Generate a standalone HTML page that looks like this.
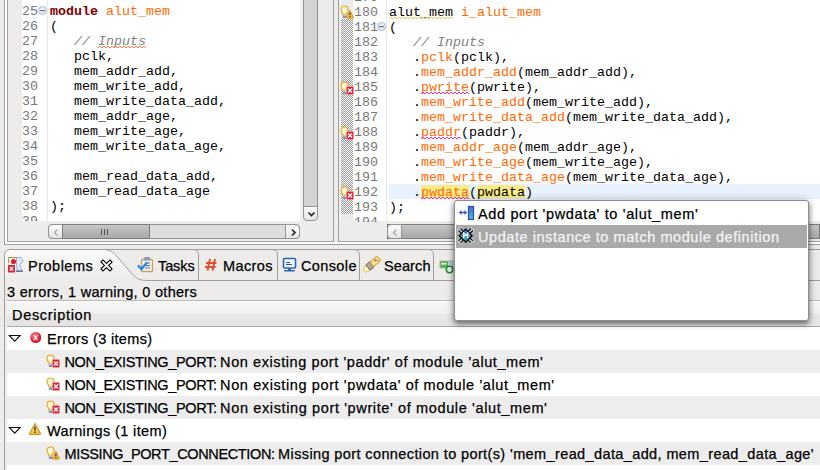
<!DOCTYPE html>
<html><head><meta charset="utf-8">
<style>
*{margin:0;padding:0;box-sizing:border-box}
html,body{width:820px;height:470px;overflow:hidden;background:#edeceb;position:relative}
.a{position:absolute}
.mono{font-family:"Liberation Mono",monospace;font-size:13.333px;line-height:15px;white-space:pre;color:#000}
.ui{font-family:"Liberation Sans",sans-serif;font-size:14.5px;line-height:17px;white-space:pre;color:#000;-webkit-text-stroke:0.25px currentColor}
.ln{color:#787878;text-align:right}
.kw{color:#7f0000;font-weight:bold}
.id{color:#ff6a00}
.cm{color:#808080;font-style:italic}
.hly{background:#fbec88}
.sq{}
</style></head><body>

<svg width="0" height="0" style="position:absolute">
<defs>
 <radialGradient id="gBulb" cx="0.45" cy="0.42" r="0.55"><stop offset="0" stop-color="#fffff4"/><stop offset="0.6" stop-color="#fdf3c0"/><stop offset="1" stop-color="#f4d070"/></radialGradient>
 <linearGradient id="gBase" x1="0" y1="0" x2="0" y2="1"><stop offset="0" stop-color="#d8dde4"/><stop offset="1" stop-color="#5a7090"/></linearGradient>
 <radialGradient id="gErr" cx="0.4" cy="0.35" r="0.7"><stop offset="0" stop-color="#ff8a95"/><stop offset="0.6" stop-color="#e52a3a"/><stop offset="1" stop-color="#c01020"/></radialGradient>
 <linearGradient id="gWarn" x1="0" y1="0" x2="0" y2="1"><stop offset="0" stop-color="#fff2b0"/><stop offset="1" stop-color="#f0b830"/></linearGradient>
 <linearGradient id="gBlue" x1="0" y1="0" x2="0" y2="1"><stop offset="0" stop-color="#4a70d0"/><stop offset="1" stop-color="#50c0b0"/></linearGradient>
 <linearGradient id="gDia" x1="1" y1="0" x2="0" y2="1"><stop offset="0" stop-color="#3a5ad8"/><stop offset="1" stop-color="#40c0a8"/></linearGradient>
 <symbol id="bulb" viewBox="0 0 16 16">
   <path d="M3.8 10.5 C3.6 9 2 8 2 5.6 C2 3.6 3.6 2 5.6 2 C7.6 2 9.2 3.6 9.2 5.6 C9.2 8 7.6 9 7.4 10.5 Z" fill="url(#gBulb)" stroke="#e8a735" stroke-width="1.1"/>
   <rect x="3.7" y="10.3" width="3.8" height="3.4" rx="1" fill="url(#gBase)"/>
 </symbol>
 <symbol id="sqerr" viewBox="0 0 16 16">
   <rect x="7" y="6" width="8" height="9" fill="#fff" opacity="0.8"/>
   <rect x="7.5" y="6.5" width="7" height="8" fill="#d9243a"/>
   <path d="M9 8.5 L13 12.5 M13 8.5 L9 12.5" stroke="#fff" stroke-width="1.2"/>
 </symbol>
 <symbol id="triwarn" viewBox="0 0 16 16">
   <path d="M10.9 6.4 L14.4 13.4 Q14.6 14.1 13.9 14.1 H7.9 Q7.2 14.1 7.4 13.4 Z" fill="url(#gWarn)" stroke="#d9901a" stroke-width="1" stroke-linejoin="round"/>
   <rect x="10.3" y="8.6" width="1.2" height="2.8" fill="#3a2a00"/>
   <rect x="10.3" y="12" width="1.2" height="1.1" fill="#3a2a00"/>
 </symbol>
 <symbol id="fold" viewBox="0 0 10 10">
   <circle cx="4.5" cy="4.5" r="4" fill="#e4eef6" stroke="#aab8c6" stroke-width="1"/>
   <rect x="2" y="4" width="5" height="1.2" fill="#6a7a8a"/>
 </symbol>
</defs></svg>
<div class="a" style="left:4px;top:0;width:1px;height:245px;background:#a09f9c"></div>
<div class="a" style="left:5px;top:0;width:2px;height:242px;background:#fff"></div>
<div class="a" style="left:4px;top:244px;width:816px;height:1px;background:#a09f9c"></div>
<div class="a" style="left:5px;top:242px;width:815px;height:2px;background:#fff"></div>
<div class="a" style="left:7px;top:0;width:1px;height:242px;background:#a09f9c"></div>
<div class="a" style="left:7px;top:241px;width:327px;height:1px;background:#a09f9c"></div>
<div class="a" style="left:333px;top:0;width:1px;height:242px;background:#a09f9c"></div>
<div class="a" style="left:338px;top:0;width:1px;height:242px;background:#a09f9c"></div>
<div class="a" style="left:338px;top:241px;width:482px;height:1px;background:#a09f9c"></div>
<div class="a" style="left:22px;top:0;width:25px;height:221px;background:#fff"></div>
<div class="a" style="left:47px;top:0;width:1px;height:221px;background:#e8e8e8"></div>
<div class="a" style="left:48px;top:0;width:252px;height:221px;background:#fff;overflow:hidden"><div class="a mono" style="left:2px;top:4px"><span class="kw">module</span> <span class="id">alut_mem</span>
(
   <span class="cm">// <span class="sq sqo">Inputs</span></span>
   pclk,
   mem_addr_add,
   mem_write_add,
   mem_write_data_add,
   mem_addr_age,
   mem_write_age,
   mem_write_data_age,

   mem_read_data_add,
   mem_read_data_age
);
</div></div>
<div class="a mono ln" style="left:14px;top:4px;width:24px;height:217px;overflow:hidden">25
26
27
28
29
30
31
32
33
34
35
36
37
38
39</div>
<svg class="a" style="left:38px;top:6px" width="10" height="10"><use href="#fold"/></svg>
<div class="a" style="left:300px;top:0;width:3px;height:221px;background:#f0efee"></div>
<div class="a" style="left:303px;top:-4px;width:15px;height:211px;background:#d5d3d1;border:1px solid #96948f;border-radius:0 0 0 0"></div>
<div class="a" style="left:303px;top:206px;width:15px;height:15px;background:linear-gradient(#fbfbfb,#e4e4e4);border:1px solid #96948f;border-radius:0 0 4px 4px"><svg class="a" style="left:3px;top:3px" width="9" height="8"><path d="M1.5 2.5 L4.5 5.5 L7.5 2.5" fill="none" stroke="#222" stroke-width="1.6"/></svg></div>
<div class="a" style="left:48px;top:224px;width:252px;height:15px;background:#dddcda;border:1px solid #96948f;border-radius:4px"></div>
<div class="a" style="left:48px;top:224px;width:15px;height:15px;background:linear-gradient(#fbfbfb,#e4e4e4);border:1px solid #96948f;border-radius:4px 0 0 4px"><svg class="a" style="left:3px;top:3px" width="8" height="9"><path d="M5.5 1.5 L2.5 4.5 L5.5 7.5" fill="none" stroke="#aaa" stroke-width="1.3"/></svg></div>
<div class="a" style="left:62px;top:224px;width:88px;height:15px;background:linear-gradient(#c6c6c6,#a8a8a8);border:1px solid #7c7c7c"><div class="a" style="left:38px;top:4px;width:1px;height:6px;background:#555"></div><div class="a" style="left:41px;top:4px;width:1px;height:6px;background:#555"></div><div class="a" style="left:44px;top:4px;width:1px;height:6px;background:#555"></div></div>
<div class="a" style="left:285px;top:224px;width:15px;height:15px;background:linear-gradient(#fbfbfb,#e4e4e4);border:1px solid #96948f;border-radius:0 4px 4px 0"><svg class="a" style="left:4px;top:3px" width="8" height="9"><path d="M2 1.5 L5 4.5 L2 7.5" fill="none" stroke="#222" stroke-width="1.6"/></svg></div>
<div class="a" style="left:340px;top:0;width:1px;height:221px;background:#f6f6f6"></div>
<div class="a" style="left:341px;top:0;width:12px;height:19px;background:#ebebeb"></div>
<div class="a" style="left:341px;top:19px;width:12px;height:195px;background:repeating-conic-gradient(#969696 0 25%,#ffffff 0 50%) 0 0/2px 2px"></div>
<div class="a" style="left:341px;top:214px;width:12px;height:7px;background:#ebebeb"></div>
<div class="a" style="left:353px;top:0;width:33px;height:221px;background:#fff"></div>
<div class="a" style="left:386px;top:0;width:1px;height:221px;background:#e8e8e8"></div>
<div class="a" style="left:387px;top:0;width:433px;height:221px;background:#fff;overflow:hidden"><div class="a" style="left:2px;top:184px;width:431px;height:15px;background:#e8f2fe"></div><div class="a" style="left:34px;top:185px;width:48px;height:13px;background:#fbec88"></div><div class="a" style="left:90px;top:185px;width:48px;height:13px;background:#fbec88"></div><div class="a mono" style="left:2px;top:5px"><span class="sq sqy">alut_mem</span> <span class="id">i_alut_mem</span>
(
   <span class="cm">// Inputs</span>
   .<span class="id">pclk</span>(pclk),
   .<span class="id">mem_addr_add</span>(mem_addr_add),
   .<span class="id"><span class="sq sqm">pwrite</span></span>(pwrite),
   .<span class="id">mem_write_add</span>(mem_write_add),
   .<span class="id">mem_write_data_add</span>(mem_write_data_add),
   .<span class="id"><span class="sq sqm">paddr</span></span>(paddr),
   .<span class="id">mem_addr_age</span>(mem_addr_age),
   .<span class="id">mem_write_age</span>(mem_write_age),
   .<span class="id">mem_write_data_age</span>(mem_write_data_age),
   .<span class="id">pwdata</span>(pwdata)
);</div></div>
<div class="a mono ln" style="left:354px;top:-10px;width:24px;height:232px;overflow:hidden">179
180
181
182
183
184
185
186
187
188
189
190
191
192
193
194</div>
<svg class="a" style="left:377px;top:22px" width="10" height="10"><use href="#fold"/></svg>
<svg class="a" style="left:339px;top:4px" width="16" height="16"><use href="#bulb"/></svg>
<svg class="a" style="left:339px;top:4px" width="16" height="16"><use href="#triwarn"/></svg>
<svg class="a" style="left:339px;top:80px" width="16" height="16"><use href="#bulb"/></svg>
<svg class="a" style="left:339px;top:80px" width="16" height="16"><use href="#sqerr"/></svg>
<svg class="a" style="left:339px;top:125px" width="16" height="16"><use href="#bulb"/></svg>
<svg class="a" style="left:339px;top:125px" width="16" height="16"><use href="#sqerr"/></svg>
<svg class="a" style="left:339px;top:185px" width="16" height="16"><use href="#bulb"/></svg>
<svg class="a" style="left:339px;top:185px" width="16" height="16"><use href="#sqerr"/></svg>
<div class="a" style="left:387px;top:224px;width:433px;height:15px;background:linear-gradient(#c6c6c6,#a8a8a8);border:1px solid #7c7c7c"></div>
<div class="a" style="left:387px;top:224px;width:15px;height:15px;background:linear-gradient(#fbfbfb,#e4e4e4);border:1px solid #96948f;border-radius:4px 0 0 4px"><svg class="a" style="left:3px;top:3px" width="8" height="9"><path d="M5.5 1.5 L2.5 4.5 L5.5 7.5" fill="none" stroke="#aaa" stroke-width="1.3"/></svg></div>
<svg class="a" style="left:0;top:245px" width="820" height="225">
 <defs><linearGradient id="gTab" gradientUnits="userSpaceOnUse" x1="0" y1="5" x2="0" y2="36"><stop offset="0" stop-color="#fafafa"/><stop offset="1" stop-color="#edeceb"/></linearGradient></defs>
 <rect x="0" y="35" width="820" height="190" fill="#edeceb"/>
 <path d="M4.5 225 V10.5 Q4.5 4.5 10.5 4.5 H103 C110 4.5 113 7 118 12.5 L132 29 C137 34.5 141 35.5 148 35.5 H820 V225 Z" fill="url(#gTab)"/>
 <path d="M4.5 225 V10.5 Q4.5 4.5 10.5 4.5 H103 C110 4.5 113 7 118 12.5 L132 29 C137 34.5 141 35.5 148 35.5 H820" fill="none" stroke="#a09f9c"/>
 <path d="M104 4.5 H820" fill="none" stroke="#a09f9c"/>
 <path d="M193 4.5 Q198.5 4.5 198.5 10 V35 M272 4.5 Q277.5 4.5 277.5 10 V35 M354 4.5 Q359.5 4.5 359.5 10 V35 M428 4.5 Q433.5 4.5 433.5 10 V35" fill="none" stroke="#a09f9c"/>
</svg>
<div class="a ui" style="left:28px;top:258px;letter-spacing:0.5px;">Problems</div>
<div class="a ui" style="left:158px;top:258px;letter-spacing:-0.1px;">Tasks</div>
<div class="a ui" style="left:223px;top:258px;letter-spacing:0.4px;">Macros</div>
<div class="a ui" style="left:301px;top:258px;letter-spacing:0.38px;">Console</div>
<div class="a ui" style="left:384px;top:258px;letter-spacing:0.1px;">Search</div>
<svg class="a" style="left:6px;top:254px" width="20" height="20">
 <path d="M2.5 9 V3.5 H13" fill="none" stroke="#a89a50" stroke-width="1"/>
 <path d="M10.5 3.5 H14 C16 3.5 16.5 5 16.5 7 C16.5 9 15.5 9.8 13.8 10 L16 17.5 H11.5 L10.5 10 Z" fill="#dfeaf6" stroke="#9fb2cc" stroke-width="1"/>
 <rect x="10" y="16.5" width="7" height="1.2" fill="#4a5a80"/>
 <circle cx="7.5" cy="7.5" r="2.6" fill="#e0202a"/>
 <rect x="2" y="11" width="7" height="7.5" fill="#d9243a"/>
 <path d="M3.8 12.8 L7.2 16.6 M7.2 12.8 L3.8 16.6" stroke="#fff" stroke-width="1.2"/>
</svg>
<svg class="a" style="left:100px;top:259px" width="13" height="13">
 <path d="M3 3 L10 10 M10 3 L3 10" stroke="#000" stroke-width="4" stroke-linecap="square"/>
 <path d="M3 3 L10 10 M10 3 L3 10" stroke="#fff" stroke-width="1.8" stroke-linecap="square"/>
</svg>
<svg class="a" style="left:136px;top:254px" width="20" height="20">
 <rect x="5.5" y="5.5" width="11" height="12" rx="1" fill="#f4f4f8" stroke="#c8a060" stroke-width="1.4"/>
 <path d="M7.5 6.5 L8.5 3 H13.5 L14.5 6.5 Z" fill="#8a9ab8"/>
 <path d="M10 9 H14 M10 11.5 H14 M9 14 H14" stroke="#5a6aa0" stroke-width="1"/>
 <path d="M2.5 12 L5.5 15 L10.5 9" fill="none" stroke="#1a88e0" stroke-width="2.2" stroke-linecap="round"/>
</svg>
<svg class="a" style="left:202px;top:254px" width="20" height="20">
 <path d="M8 5 L5.5 16.5 M13 5 L10.5 16.5 M4 9 H14.5 M3 13 H13.5" stroke="#e0502a" stroke-width="2"/>
</svg>
<svg class="a" style="left:279px;top:254px" width="20" height="20">
 <rect x="4.5" y="4.5" width="12" height="9.5" rx="1" fill="#eef8ff" stroke="#2c62b0" stroke-width="1.6"/>
 <path d="M7 8.5 H11 M7 10.5 H13" stroke="#3a4a90" stroke-width="1"/>
 <rect x="9" y="14.5" width="3" height="1.5" fill="#2c62b0"/>
 <rect x="5" y="16" width="11" height="1.5" rx="0.7" fill="#2c62b0"/>
</svg>
<svg class="a" style="left:361px;top:254px" width="20" height="20">
 <g transform="translate(3.2 16.8) rotate(-40)">
  <path d="M0 -2 L5 -3.2 V3.2 L0 2 Z" fill="#fffbe0" stroke="#f0b030" stroke-width="0.9"/>
  <path d="M5 -3.4 H10 V3.4 H5 Z" fill="#aaa6b2" stroke="#7a6440" stroke-width="0.9"/>
  <path d="M10 -2.9 H18 Q19.5 -2.9 19.5 0 Q19.5 2.9 18 2.9 H10 Z" fill="#fbe49a" stroke="#e8961c" stroke-width="1.1"/>
  <circle cx="15.2" cy="-0.9" r="0.75" fill="#2a56a8"/><circle cx="16.6" cy="0.5" r="0.75" fill="#2a56a8"/>
 </g>
</svg>
<svg class="a" style="left:436px;top:254px" width="20" height="20">
 <rect x="4" y="7" width="13" height="7" fill="#b8d0e0" stroke="#a08060" stroke-width="0.6"/>
 <rect x="4.5" y="7.5" width="7.5" height="6" fill="#50b050"/>
 <rect x="5.5" y="9" width="5" height="1.6" fill="#e8ffe8"/>
 <circle cx="13.5" cy="15.5" r="3.2" fill="#fff" stroke="#1a8a30" stroke-width="1.6"/>
 <path d="M12.6 13.8 L15.2 15.5 L12.6 17.2 Z" fill="#ddd"/>
</svg>
<div class="a ui" style="left:7px;top:284px;letter-spacing:0.3px;">3 errors, 1 warning, 0 others</div>
<div class="a" style="left:5px;top:280px;width:2px;height:190px;background:#edeceb"></div>
<div class="a" style="left:7px;top:300px;width:813px;height:170px;background:#fff"></div>
<div class="a" style="left:7px;top:300px;width:813px;height:27px;background:linear-gradient(#fdfdfd 0,#f5f5f4 8%,#f3f3f2 45%,#e9e8e7 55%,#e5e4e3 100%);border-top:1px solid #bcbbb9;border-bottom:1px solid #aaa9a7"></div>
<div class="a ui" style="left:12px;top:307px;letter-spacing:0.69px;">Description</div>
<div class="a" style="left:7px;top:350px;width:813px;height:23px;background:#ededed"></div>
<div class="a" style="left:7px;top:396px;width:813px;height:23px;background:#ededed"></div>
<div class="a" style="left:7px;top:442px;width:813px;height:23px;background:#ededed"></div>
<div class="a ui" style="left:47px;top:331px;letter-spacing:0.35px;">Errors (3 items)</div>
<div class="a ui" style="left:64.5px;top:354px;letter-spacing:-0.349px;">NON_EXISTING_PORT:</div>
<div class="a ui" style="left:220.1px;top:354px;letter-spacing:0.586px;">Non existing port 'paddr' of module 'alut_mem'</div>
<div class="a ui" style="left:64.5px;top:377px;letter-spacing:-0.349px;">NON_EXISTING_PORT:</div>
<div class="a ui" style="left:220.1px;top:377px;letter-spacing:0.607px;">Non existing port 'pwdata' of module 'alut_mem'</div>
<div class="a ui" style="left:64.5px;top:400px;letter-spacing:-0.349px;">NON_EXISTING_PORT:</div>
<div class="a ui" style="left:220.1px;top:400px;letter-spacing:0.626px;">Non existing port 'pwrite' of module 'alut_mem'</div>
<div class="a ui" style="left:47px;top:423px;letter-spacing:0.37px;">Warnings (1 item)</div>
<div class="a ui" style="left:64.5px;top:446px;letter-spacing:-0.363px;">MISSING_PORT_CONNECTION:</div>
<div class="a ui" style="left:278.1px;top:446px;letter-spacing:0.386px;">Missing port connection to port(s) 'mem_read_data_add, mem_read_data_age'</div>
<svg class="a" style="left:8px;top:334px" width="14" height="9"><path d="M1.3 1.5 H12.2 L6.75 7.2 Z" fill="#fff" stroke="#111" stroke-width="1.1" stroke-linejoin="miter"/></svg>
<svg class="a" style="left:8px;top:426px" width="14" height="9"><path d="M1.3 1.5 H12.2 L6.75 7.2 Z" fill="#fff" stroke="#111" stroke-width="1.1" stroke-linejoin="miter"/></svg>
<svg class="a" style="left:29px;top:331px" width="14" height="14"><circle cx="6.7" cy="6.5" r="5.5" fill="url(#gErr)"/><path d="M5 4 Q6.5 6.5 8.5 9.2 M8.6 4 Q6.8 6.5 4.8 9.2" stroke="#fff" stroke-width="1.1" fill="none"/></svg>
<svg class="a" style="left:28px;top:422px" width="14" height="14"><path d="M7 1.6 L12.4 11.6 Q12.6 12.5 11.8 12.5 H2.2 Q1.4 12.5 1.6 11.6 Z" fill="url(#gWarn)" stroke="#d9901a" stroke-width="1.1" stroke-linejoin="round"/><rect x="6.3" y="4.5" width="1.4" height="4" fill="#3a2a00"/><rect x="6.3" y="9.5" width="1.4" height="1.4" fill="#3a2a00"/></svg>
<svg class="a" style="left:45px;top:353px" width="16" height="16"><use href="#bulb"/></svg>
<svg class="a" style="left:45px;top:353px" width="16" height="16"><use href="#sqerr"/></svg>
<svg class="a" style="left:45px;top:376px" width="16" height="16"><use href="#bulb"/></svg>
<svg class="a" style="left:45px;top:376px" width="16" height="16"><use href="#sqerr"/></svg>
<svg class="a" style="left:45px;top:399px" width="16" height="16"><use href="#bulb"/></svg>
<svg class="a" style="left:45px;top:399px" width="16" height="16"><use href="#sqerr"/></svg>
<svg class="a" style="left:45px;top:445px" width="16" height="16"><use href="#bulb"/></svg>
<svg class="a" style="left:45px;top:445px" width="16" height="16"><use href="#triwarn"/></svg>
<svg class="a" style="left:0;top:0" width="820" height="250"><path d="M99 46h2v1h-2zM98 47h1v1h-1zM101 47h1v1h-1zM103 46h2v1h-2zM102 47h1v1h-1zM105 47h1v1h-1zM107 46h2v1h-2zM106 47h1v1h-1zM109 47h1v1h-1zM111 46h2v1h-2zM110 47h1v1h-1zM113 47h1v1h-1zM115 46h2v1h-2zM114 47h1v1h-1zM117 47h1v1h-1zM119 46h2v1h-2zM118 47h1v1h-1zM121 47h1v1h-1zM123 46h2v1h-2zM122 47h1v1h-1zM125 47h1v1h-1zM127 46h2v1h-2zM126 47h1v1h-1zM129 47h1v1h-1zM131 46h2v1h-2zM130 47h1v1h-1zM133 47h1v1h-1zM135 46h2v1h-2zM134 47h1v1h-1zM137 47h1v1h-1zM139 46h2v1h-2zM138 47h1v1h-1zM141 47h1v1h-1zM143 46h2v1h-2zM142 47h1v1h-1zM145 47h1v1h-1z" fill="#ff7a48"/></svg>
<svg class="a" style="left:0;top:0" width="820" height="250"><path d="M390 17h2v1h-2zM389 18h1v1h-1zM392 18h1v1h-1zM394 17h2v1h-2zM393 18h1v1h-1zM396 18h1v1h-1zM398 17h2v1h-2zM397 18h1v1h-1zM400 18h1v1h-1zM402 17h2v1h-2zM401 18h1v1h-1zM404 18h1v1h-1zM406 17h2v1h-2zM405 18h1v1h-1zM408 18h1v1h-1zM410 17h2v1h-2zM409 18h1v1h-1zM412 18h1v1h-1zM414 17h2v1h-2zM413 18h1v1h-1zM416 18h1v1h-1zM418 17h2v1h-2zM417 18h1v1h-1zM420 18h1v1h-1zM422 17h2v1h-2zM421 18h1v1h-1zM424 18h1v1h-1zM426 17h2v1h-2zM425 18h1v1h-1zM428 18h1v1h-1zM430 17h2v1h-2zM429 18h1v1h-1zM432 18h1v1h-1zM434 17h2v1h-2zM433 18h1v1h-1zM436 18h1v1h-1zM438 17h2v1h-2zM437 18h1v1h-1zM440 18h1v1h-1zM442 17h2v1h-2zM441 18h1v1h-1zM444 18h1v1h-1zM446 17h2v1h-2zM445 18h1v1h-1zM448 18h1v1h-1zM450 17h2v1h-2zM449 18h1v1h-1zM452 18h1v1h-1z" fill="#f5ca58"/></svg>
<svg class="a" style="left:0;top:0" width="820" height="250"><path d="M422 92h2v1h-2zM421 93h1v1h-1zM424 93h1v1h-1zM426 92h2v1h-2zM425 93h1v1h-1zM428 93h1v1h-1zM430 92h2v1h-2zM429 93h1v1h-1zM432 93h1v1h-1zM434 92h2v1h-2zM433 93h1v1h-1zM436 93h1v1h-1zM438 92h2v1h-2zM437 93h1v1h-1zM440 93h1v1h-1zM442 92h2v1h-2zM441 93h1v1h-1zM444 93h1v1h-1zM446 92h2v1h-2zM445 93h1v1h-1zM448 93h1v1h-1zM450 92h2v1h-2zM449 93h1v1h-1zM452 93h1v1h-1zM454 92h2v1h-2zM453 93h1v1h-1zM456 93h1v1h-1zM458 92h2v1h-2zM457 93h1v1h-1zM460 93h1v1h-1zM462 92h2v1h-2zM461 93h1v1h-1zM464 93h1v1h-1zM466 92h2v1h-2zM465 93h1v1h-1zM468 93h1v1h-1z" fill="#ff2a9a"/></svg>
<svg class="a" style="left:0;top:0" width="820" height="250"><path d="M422 137h2v1h-2zM421 138h1v1h-1zM424 138h1v1h-1zM426 137h2v1h-2zM425 138h1v1h-1zM428 138h1v1h-1zM430 137h2v1h-2zM429 138h1v1h-1zM432 138h1v1h-1zM434 137h2v1h-2zM433 138h1v1h-1zM436 138h1v1h-1zM438 137h2v1h-2zM437 138h1v1h-1zM440 138h1v1h-1zM442 137h2v1h-2zM441 138h1v1h-1zM444 138h1v1h-1zM446 137h2v1h-2zM445 138h1v1h-1zM448 138h1v1h-1zM450 137h2v1h-2zM449 138h1v1h-1zM452 138h1v1h-1zM454 137h2v1h-2zM453 138h1v1h-1zM456 138h1v1h-1zM458 137h2v1h-2zM457 138h1v1h-1zM460 138h1v1h-1z" fill="#ff2a9a"/></svg>
<svg class="a" style="left:0;top:0" width="820" height="250"><path d="M422 197h2v1h-2zM421 198h1v1h-1zM424 198h1v1h-1zM426 197h2v1h-2zM425 198h1v1h-1zM428 198h1v1h-1zM430 197h2v1h-2zM429 198h1v1h-1zM432 198h1v1h-1zM434 197h2v1h-2zM433 198h1v1h-1zM436 198h1v1h-1zM438 197h2v1h-2zM437 198h1v1h-1zM440 198h1v1h-1zM442 197h2v1h-2zM441 198h1v1h-1zM444 198h1v1h-1zM446 197h2v1h-2zM445 198h1v1h-1zM448 198h1v1h-1zM450 197h2v1h-2zM449 198h1v1h-1zM452 198h1v1h-1zM454 197h2v1h-2zM453 198h1v1h-1zM456 198h1v1h-1zM458 197h2v1h-2zM457 198h1v1h-1zM460 198h1v1h-1zM462 197h2v1h-2zM461 198h1v1h-1zM464 198h1v1h-1zM466 197h2v1h-2zM465 198h1v1h-1zM468 198h1v1h-1z" fill="#ff2a9a"/></svg>
<div class="a" style="left:454px;top:200px;width:355px;height:121px;background:#fff;border:1px solid #8e8e8e;border-radius:3px;box-shadow:0 3px 5px rgba(0,0,0,0.4),0 1px 9px rgba(0,0,0,0.3)"></div>
<div class="a" style="left:456px;top:225px;width:351px;height:23px;background:#a9a9a9"></div>
<div class="a ui" style="left:478px;top:206px;letter-spacing:0.64px;">Add port 'pwdata' to 'alut_mem'</div>
<div class="a ui" style="left:478px;top:229px;letter-spacing:0.56px;color:#f4f4f4">Update instance to match module definition</div>
<svg class="a" style="left:456px;top:203px" width="20" height="20">
 <path d="M3.5 9.5 H10.5" stroke="#3a5ac8" stroke-width="1.6"/>
 <path d="M3 9.5 L5.5 7 V12 Z M11 9.5 L8.5 7 V12 Z" fill="#3a5ac8"/>
 <rect x="12.5" y="3.5" width="5" height="13" fill="url(#gBlue)" stroke="#2c4ab8" stroke-width="1.2"/>
</svg>
<svg class="a" style="left:456px;top:226px" width="20" height="20">
 <g transform="translate(-0.3 -0.3)">
 <path d="M5.8 7.8 L2.8 4.8 M7.8 5.8 L4.8 2.8 M12.2 5.8 L15.2 2.8 M14.2 7.8 L17.2 4.8 M14.2 12.2 L17.2 15.2 M12.2 14.2 L15.2 17.2 M7.8 14.2 L4.8 17.2 M5.8 12.2 L2.8 15.2" stroke="#d4d4d4" stroke-width="2.6" stroke-linecap="round"/>
 <path d="M5.8 7.8 L2.8 4.8 M7.8 5.8 L4.8 2.8 M12.2 5.8 L15.2 2.8 M14.2 7.8 L17.2 4.8 M14.2 12.2 L17.2 15.2 M12.2 14.2 L15.2 17.2 M7.8 14.2 L4.8 17.2 M5.8 12.2 L2.8 15.2" stroke="#000" stroke-width="1.1"/>
 <path d="M10 3.5 L16.5 10 L10 16.5 L3.5 10 Z" fill="url(#gDia)" stroke="#000" stroke-width="1.2"/>
 <path d="M8 12.6 V7.6 L10 10 L12 7.6 V12.6" fill="none" stroke="#fff" stroke-width="1.3"/>
 </g>
</svg>

</body></html>
